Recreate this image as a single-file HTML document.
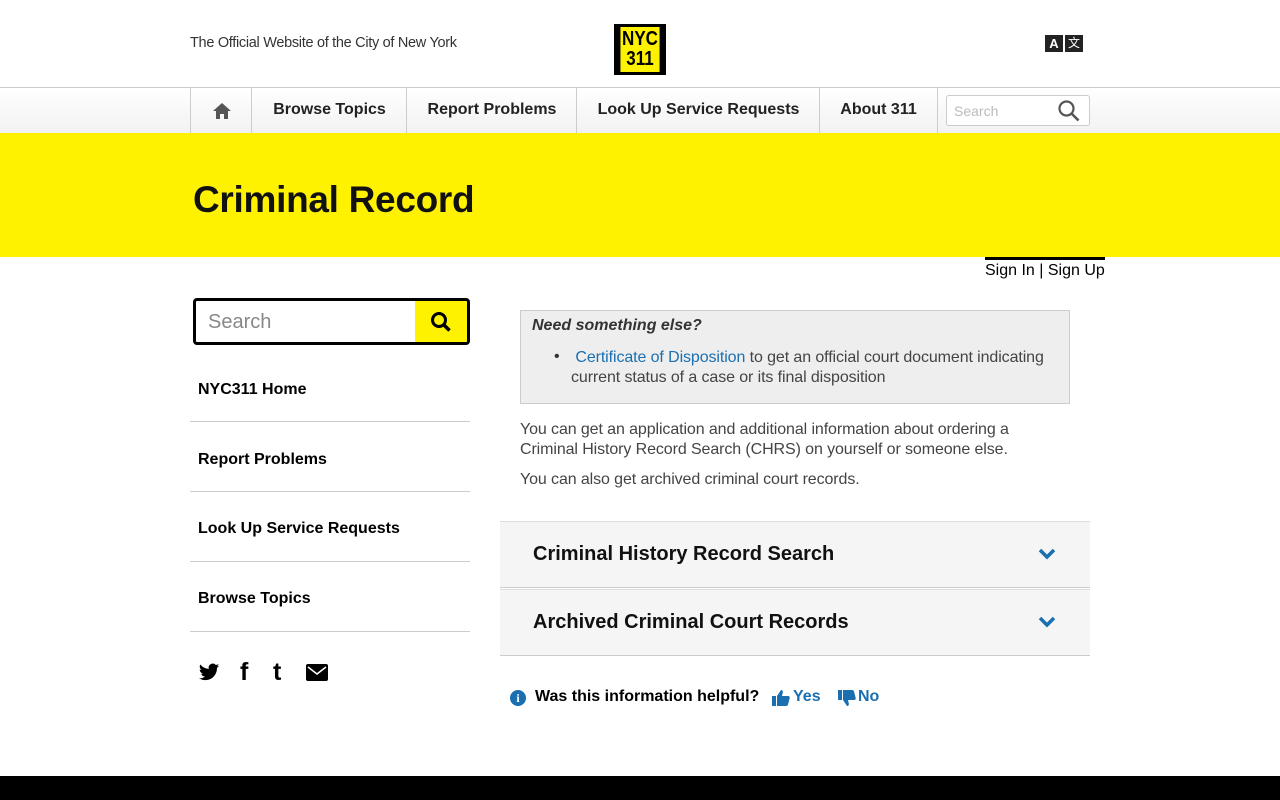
<!DOCTYPE html>
<html><head><meta charset="utf-8"><style>
*{box-sizing:border-box;margin:0;padding:0}
body{width:1280px;height:800px;overflow:hidden;font-family:"Liberation Sans",Arial,sans-serif;background:#fff;position:relative;color:#222}
.abs{position:absolute}
a{text-decoration:none}
.nav{position:absolute;top:87px;left:0;width:1280px;height:46px;border-top:1px solid #ccc;background:linear-gradient(#fff,#f2f2f2)}
.nav .item{position:absolute;top:0;height:45px;line-height:44px;font-weight:bold;font-size:16px;color:#222;text-align:center;border-left:1px solid #ccc}
.side a{position:absolute;left:198px;font-weight:bold;font-size:16px;color:#000}
.side .hr{position:absolute;left:190px;width:280px;height:1px;background:#ccc}
.acc{position:absolute;left:500px;width:590px;height:67px;background:#f5f5f5;border-top:1px solid #ddd;border-bottom:1px solid #ccc}
.acc span{position:absolute;left:33px;top:21px;font-size:20px;font-weight:bold;color:#111}
.acc svg{position:absolute;right:34px;top:26px}
</style></head><body>
<div class="abs" style="left:190px;top:35px;font-size:14.5px;color:#333;letter-spacing:-0.3px">The Official Website of the City of New York</div>
<div class="abs" style="left:614px;top:24px;width:52px;height:51px;background:#000;padding:3px"><div style="background:#fff200;width:46px;height:45px;text-align:center;font-weight:bold;font-size:20px;line-height:20px;color:#000;padding-top:2px;transform:scaleX(0.85)">NYC<br>311</div></div>
<div class="abs" style="left:1045px;top:35px;width:18px;height:17px;background:#222;color:#fff;font-weight:bold;font-size:13px;text-align:center;line-height:17px">A</div>
<div class="abs" style="left:1065px;top:35px;width:18px;height:17px;background:#222;color:#fff;font-size:12px;text-align:center;line-height:17px">文</div>
<div class="nav">
<div class="item" style="left:190px;width:62px"><svg width="20" height="18" viewBox="0 0 20 18" style="margin-top:14px"><path d="M10 1L1 9h3v8h4v-5h4v5h4V9h3z" fill="#555"/></svg></div>
<div class="item" style="left:251px;width:156px">Browse Topics</div>
<div class="item" style="left:406px;width:171px">Report Problems</div>
<div class="item" style="left:576px;width:244px">Look Up Service Requests</div>
<div class="item" style="left:819px;width:119px;border-right:1px solid #ccc">About 311</div>
<div class="abs" style="left:946px;top:7px;width:144px;height:31px;border:1px solid #ccc;border-radius:3px;background:#fff"><span style="position:absolute;left:7px;top:7px;font-size:14px;color:#bbb">Search</span><svg width="24" height="24" viewBox="0 0 24 24" style="position:absolute;right:8px;top:3px"><circle cx="9.5" cy="9.5" r="7" fill="none" stroke="#555" stroke-width="2.2"/><path d="M14.5 14.5l7 7" stroke="#555" stroke-width="2.6"/></svg></div>
</div>
<div class="abs" style="left:0;top:133px;width:1280px;height:124px;background:#fff200"></div>
<div class="abs" style="left:193px;top:179px;font-size:37px;font-weight:bold;color:#111;letter-spacing:-0.3px">Criminal Record</div>
<div class="abs" style="left:985px;top:257px;width:120px;height:3px;background:#000"></div>
<div class="abs" style="left:985px;top:262px;font-size:16px;color:#000">Sign In | Sign Up</div>
<div class="abs" style="left:193px;top:298px;width:277px;height:47px;border:3px solid #000;border-radius:4px;overflow:hidden"><span style="position:absolute;left:12px;top:10px;font-size:20px;color:#888">Search</span><div style="position:absolute;right:0;top:0;width:52px;height:41px;background:#fff200"><svg width="22" height="22" viewBox="0 0 22 22" style="position:absolute;left:15px;top:10px"><circle cx="9" cy="9" r="6.5" fill="none" stroke="#000" stroke-width="3"/><path d="M13.5 13.5l6 6" stroke="#000" stroke-width="3.5"/></svg></div></div>
<div class="side">
<a style="top:381px">NYC311 Home</a><div class="hr" style="top:421px"></div>
<a style="top:451px">Report Problems</a><div class="hr" style="top:491px"></div>
<a style="top:520px">Look Up Service Requests</a><div class="hr" style="top:561px"></div>
<a style="top:590px">Browse Topics</a><div class="hr" style="top:631px"></div>
</div>
<svg class="abs" style="left:198px;top:663px" width="22" height="19" viewBox="0 0 24 20"><path d="M23 2.5c-.8.4-1.7.6-2.6.7.9-.6 1.6-1.4 2-2.5-.9.5-1.9.9-2.9 1.1A4.5 4.5 0 0 0 11.8 6 12.8 12.8 0 0 1 2.5 1.3a4.5 4.5 0 0 0 1.4 6 4.5 4.5 0 0 1-2-.6 4.5 4.5 0 0 0 3.6 4.5 4.5 4.5 0 0 1-2 .1 4.5 4.5 0 0 0 4.2 3.1A9 9 0 0 1 1 16.3 12.8 12.8 0 0 0 7.9 18.3c8.3 0 12.8-6.9 12.8-12.8v-.6c.9-.6 1.7-1.4 2.3-2.4z" fill="#000"/></svg>
<div class="abs" style="left:240px;top:658px;font-size:25px;font-weight:bold;color:#000">f</div>
<div class="abs" style="left:273px;top:658px;font-size:25px;font-weight:bold;color:#000">t</div>
<svg class="abs" style="left:306px;top:664px" width="22" height="17" viewBox="0 0 22 17"><rect width="22" height="17" rx="2" fill="#000"/><path d="M2 3l9 7 9-7" fill="none" stroke="#fff" stroke-width="1.5"/></svg>
<div class="abs" style="left:520px;top:310px;width:550px;height:94px;background:#eee;border:1px solid #ccc"></div>
<div class="abs" style="left:532px;top:317px;font-size:16px;font-weight:bold;font-style:italic;color:#333">Need something else?</div>
<div class="abs" style="left:554px;top:348px;font-size:16px;color:#333">•</div>
<div class="abs" style="left:571px;top:348px;width:490px;font-size:16px;line-height:20px;color:#444;letter-spacing:-0.1px">&nbsp;<a style="color:#1a6fb0">Certificate of Disposition</a> to get an official court document indicating current status of a case or its final disposition</div>
<div class="abs" style="left:520px;top:420px;width:540px;font-size:16px;line-height:20px;color:#444;letter-spacing:-0.1px">You can get an application and additional information about ordering a Criminal History Record Search (CHRS) on yourself or someone else.</div>
<div class="abs" style="left:520px;top:471px;font-size:16px;color:#444;letter-spacing:-0.1px">You can also get archived criminal court records.</div>
<div class="acc" style="top:521px"><span>Criminal History Record Search</span><svg width="18" height="12" viewBox="0 0 18 12"><path d="M2 2l7 7 7-7" fill="none" stroke="#1a6fb0" stroke-width="3.5"/></svg></div>
<div class="acc" style="top:589px"><span>Archived Criminal Court Records</span><svg width="18" height="12" viewBox="0 0 18 12"><path d="M2 2l7 7 7-7" fill="none" stroke="#1a6fb0" stroke-width="3.5"/></svg></div>
<div class="abs" style="left:510px;top:690px;width:16px;height:16px;border-radius:50%;background:#1a6fb0;color:#fff;font-size:12px;font-weight:bold;text-align:center;line-height:16px;font-family:'Liberation Serif',serif">i</div>
<div class="abs" style="left:535px;top:688px;font-size:16px;font-weight:bold;color:#000">Was this information helpful?</div>
<svg class="abs" style="left:772px;top:689px" width="18" height="17" viewBox="0 0 18 17"><rect x="0" y="7" width="4" height="10" fill="#1a6fb0"/><path d="M5 7l4-6c1.5 0 2 1 1.8 2.5L10 7h6c1.2 0 2 1 1.7 2l-1.7 6.5c-.3.9-1 1.5-2 1.5H5z" fill="#1a6fb0"/></svg>
<div class="abs" style="left:793px;top:688px;font-size:16px;font-weight:bold;color:#1a6fb0">Yes</div>
<svg class="abs" style="left:838px;top:690px" width="18" height="17" viewBox="0 0 18 17"><rect x="0" y="0" width="4" height="10" fill="#1a6fb0"/><path d="M5 10l4 6c1.5 0 2-1 1.8-2.5L10 10h6c1.2 0 2-1 1.7-2L16 1.5C15.7.6 15 0 14 0H5z" fill="#1a6fb0"/></svg>
<div class="abs" style="left:858px;top:688px;font-size:16px;font-weight:bold;color:#1a6fb0">No</div>
<div class="abs" style="left:0;top:776px;width:1280px;height:24px;background:#000"></div>
</body></html>
